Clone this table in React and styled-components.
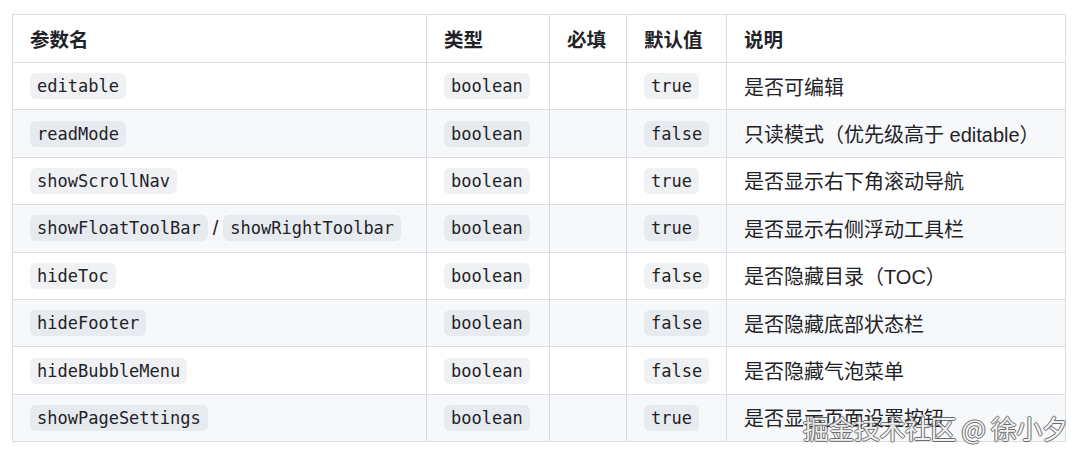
import React from "react";
import styled, { createGlobalStyle } from "styled-components";

const Global = createGlobalStyle`
  html, body { margin: 0; padding: 0; background: #ffffff; }
  body { font-family: "Liberation Sans", "Noto Sans CJK SC", sans-serif; color: #1f2328; }
`;

const Page = styled.div`
  position: relative;
  padding: 14px 15px 0 12px;
  width: 1080px;
  height: 459px;
  box-sizing: border-box;
`;

const Table = styled.table`
  width: 1053px;
  border-collapse: collapse;
  table-layout: fixed;
  font-size: 20px;
`;

const Th = styled.th`
  box-sizing: border-box;
  width: ${(p) => p.$w}px;
  height: 48px;
  padding: 0 17px;
  text-align: left;
  font-weight: 700;
  font-size: 19.5px;
  border: 1px solid #d9dde1;
  font-family: "Noto Sans CJK SC", sans-serif;
`;

const Tr = styled.tr`
  background: ${(p) => (p.$alt ? "#f6f8fa" : "#ffffff")};
`;

const Td = styled.td`
  box-sizing: border-box;
  height: 47.4px;
  padding: 0 17px;
  border: 1px solid #d9dde1;
  white-space: nowrap;
  vertical-align: middle;
`;

const Code = styled.code`
  display: inline-block;
  height: 26px;
  line-height: 26px;
  padding: 0 7px;
  border-radius: 6px;
  background: rgba(175, 184, 193, 0.2);
  font-family: "DejaVu Sans Mono", monospace;
  font-size: 17px;
  color: #1f2328;
  vertical-align: middle;
`;

const Sep = styled.span`
  display: inline-block;
  margin: 0 5px;
  vertical-align: middle;
`;

const Desc = styled.span`
  font-family: "Liberation Sans", "Noto Sans CJK SC", sans-serif;
  vertical-align: middle;
`;

const Watermark = styled.div`
  position: absolute;
  left: 803px;
  top: 409px;
  font-family: "Noto Sans CJK SC", sans-serif;
  font-size: 26px;
  color: #f2f2f2;
  white-space: nowrap;
  text-shadow: 1px 0 0 #555, -1px 0 0 #555, 0 1px 0 #555, 0 -1px 0 #555;
  opacity: 0.85;
  letter-spacing: -0.5px;
`;

const cols = [414, 123, 77, 100, 339];

const rows = [
  { names: ["editable"], def: "true", desc: "是否可编辑" },
  { names: ["readMode"], def: "false", desc: "只读模式（优先级高于 editable）" },
  { names: ["showScrollNav"], def: "true", desc: "是否显示右下角滚动导航" },
  { names: ["showFloatToolBar", "showRightToolbar"], def: "true", desc: "是否显示右侧浮动工具栏" },
  { names: ["hideToc"], def: "false", desc: "是否隐藏目录（TOC）" },
  { names: ["hideFooter"], def: "false", desc: "是否隐藏底部状态栏" },
  { names: ["hideBubbleMenu"], def: "false", desc: "是否隐藏气泡菜单" },
  { names: ["showPageSettings"], def: "true", desc: "是否显示页面设置按钮" },
];

export default function App() {
  return (
    <Page>
      <Global />
      <Table>
        <thead>
          <tr>
            <Th $w={cols[0]}>参数名</Th>
            <Th $w={cols[1]}>类型</Th>
            <Th $w={cols[2]}>必填</Th>
            <Th $w={cols[3]}>默认值</Th>
            <Th $w={cols[4]}>说明</Th>
          </tr>
        </thead>
        <tbody>
          {rows.map((r, i) => (
            <Tr key={i} $alt={i % 2 === 1}>
              <Td>
                {r.names.map((n, j) => (
                  <React.Fragment key={n}>
                    {j > 0 && <Sep>/</Sep>}
                    <Code>{n}</Code>
                  </React.Fragment>
                ))}
              </Td>
              <Td>
                <Code>boolean</Code>
              </Td>
              <Td />
              <Td>
                <Code>{r.def}</Code>
              </Td>
              <Td>
                <Desc>{r.desc}</Desc>
              </Td>
            </Tr>
          ))}
        </tbody>
      </Table>
      <Watermark>掘金技术社区 @ 徐小夕</Watermark>
    </Page>
  );
}
